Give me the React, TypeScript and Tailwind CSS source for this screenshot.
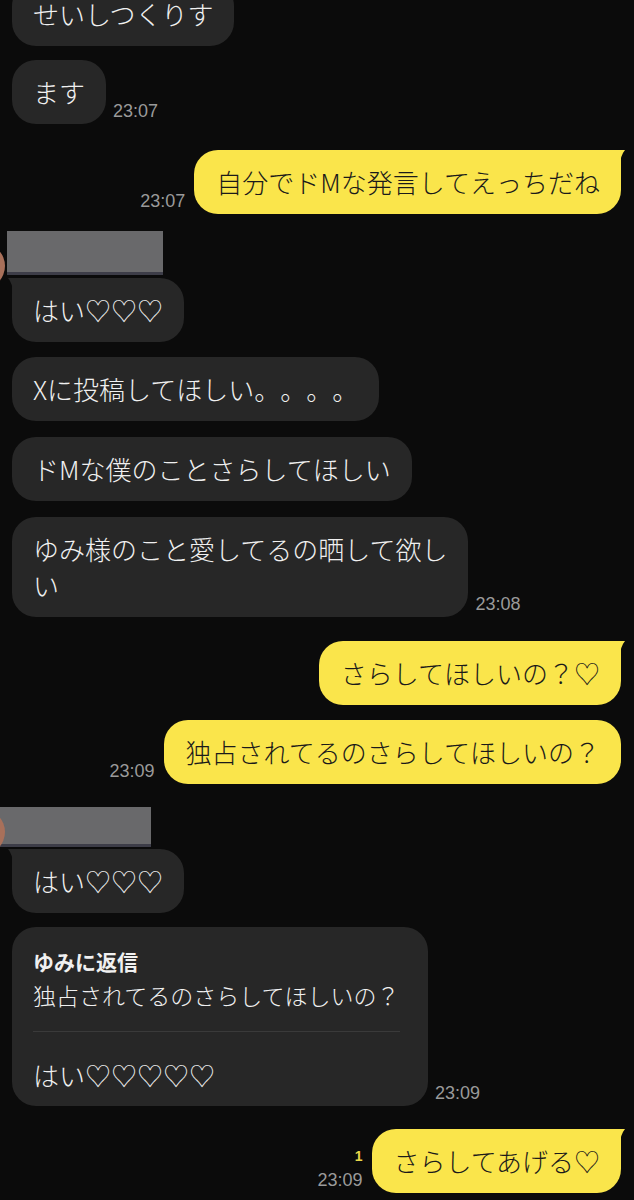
import React from "react";

const JP = { fontFamily: '"Noto Sans CJK JP", "Noto Sans", sans-serif' };
const TS = { fontFamily: '"Liberation Sans", Arial, sans-serif' };

function Ts({ t }: { t: string }) {
  return (
    <span className="text-[18px] leading-[20px] text-[#9a9a9a] pb-[3px] whitespace-nowrap" style={TS}>
      {t}
    </span>
  );
}

function Dot() {
  return <span className="inline-block w-[26px]">。</span>;
}

function LeftTail() {
  return (
    <svg className="absolute top-0 left-[-4px]" width="10" height="16" viewBox="0 0 10 16">
      <path d="M10 0 L0 0 Q5 6 5 16 L10 16 Z" fill="#272727" />
    </svg>
  );
}

function RightTail() {
  return (
    <svg className="absolute top-0 right-[-4px]" width="10" height="16" viewBox="0 0 10 16">
      <path d="M0 0 L10 0 Q5 6 5 16 L0 16 Z" fill="#fae54b" />
    </svg>
  );
}

function Left({ children, ts, tail, className = "" }: { children: React.ReactNode; ts?: string; tail?: boolean; className?: string }) {
  return (
    <div className={"flex items-end gap-[7px] pl-[12px] " + className}>
      <div
        className={
          "relative bg-[#272727] text-[#f0f0f0] text-[26px] leading-[36px] font-light px-[21px] py-[14px] rounded-[24px] " +
          (tail ? "rounded-tl-none" : "")
        }
        style={JP}
      >
        {tail && <LeftTail />}
        {children}
      </div>
      {ts && <Ts t={ts} />}
    </div>
  );
}

function Right({ children, ts, tail, read, className = "" }: { children: React.ReactNode; ts?: string; tail?: boolean; read?: boolean; className?: string }) {
  return (
    <div className={"flex items-end justify-end gap-[9px] pr-[13px] " + className}>
      {ts && (
        <div className="flex flex-col items-end">
          {read && (
            <span className="text-[14px] leading-[16px] font-bold text-[#e9d84a] mb-[6px]" style={TS}>
              1
            </span>
          )}
          <Ts t={ts} />
        </div>
      )}
      <div
        className={
          "relative bg-[#fae54b] text-[#1a1a1a] text-[26px] leading-[36px] font-light pl-[22px] pr-[21px] py-[14px] rounded-[24px] " +
          (tail ? "rounded-tr-none" : "")
        }
        style={JP}
      >
        {tail && <RightTail />}
        {children}
      </div>
    </div>
  );
}

function NameRow({ box, avatarTop, className = "" }: { box: string; avatarTop: string; className?: string }) {
  return (
    <div className={"relative " + className}>
      <div className={"bg-[#69696b] border-b-[3px] border-[#3d3d48] " + box} />
      <div className={"absolute left-[-41px] w-[46px] h-[46px] rounded-full bg-[#a8705a] " + avatarTop} />
    </div>
  );
}

export default function App() {
  return (
    <div className="w-[634px] h-[1200px] overflow-hidden bg-[#0b0b0b]">
      <div className="flex flex-col -mt-[18px]">
        <Left>せいしつくりす</Left>
        <Left ts="23:07" className="mt-[14px]">ます</Left>
        <Right ts="23:07" tail className="mt-[26px]">自分でドMな発言してえっちだね</Right>

        <NameRow box="w-[156px] h-[44px] ml-[7px]" avatarTop="top-[12px]" className="mt-[17px]" />
        <Left tail className="mt-[3px]">はい♡♡♡</Left>
        <Left className="mt-[15px]">
          Xに投稿してほしい<Dot />
          <Dot />
          <Dot />
          <Dot />
        </Left>
        <Left className="mt-[16px]">ドMな僕のことさらしてほしい</Left>
        <Left ts="23:08" className="mt-[16px]">
          ゆみ様のこと愛してるの晒して欲し
          <br />い
        </Left>

        <Right tail className="mt-[24px]">さらしてほしいの？♡</Right>
        <Right ts="23:09" className="mt-[15px]">独占されてるのさらしてほしいの？</Right>

        <NameRow box="w-[151px] h-[40px] ml-0" avatarTop="top-[2px]" className="mt-[23px]" />
        <Left tail className="mt-[2px]">はい♡♡♡</Left>

        <div className="flex items-end gap-[7px] pl-[12px] mt-[14px]">
          <div className="w-[416px] bg-[#272727] text-[#f0f0f0] rounded-[24px] pl-[21px] pr-[28px] pt-[20px] pb-[13px]" style={JP}>
            <div className="text-[21px] leading-[28px] font-bold">ゆみに返信</div>
            <div className="text-[23px] leading-[32px] font-light mt-[4px]">独占されてるのさらしてほしいの？</div>
            <div className="h-px bg-[#3a3a3a] mt-[20px]" />
            <div className="text-[26px] leading-[36px] font-light mt-[25px]">はい♡♡♡♡♡</div>
          </div>
          <Ts t="23:09" />
        </div>

        <Right ts="23:09" read tail className="mt-[23px]">さらしてあげる♡</Right>
      </div>
    </div>
  );
}
